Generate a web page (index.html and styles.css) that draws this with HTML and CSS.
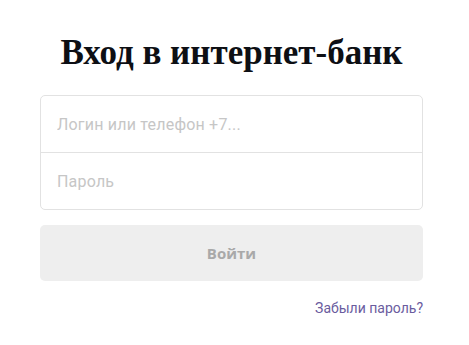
FILE: index.html
```html
<!DOCTYPE html>
<html>

<head>
    <title> Вход в интернет-банк </title>
    <link rel="stylesheet" href="styles.css">
</head>

<body>
    <div class="login">
        <h1 class="login-title">Вход в интернет-банк</h1>

        <form class="login-form">
            <div class="fields">
                <input class="field" type="text" placeholder="Логин или телефон +7...">
                <input class="field" type="password" placeholder="Пароль">
            </div>

            <button class="submit" type="button" disabled>Войти</button>

            <div class="forgot">
                <a href="#" class="forgot-link">Забыли пароль?</a>
            </div>
        </form>
    </div>
</body>

</html>
```

FILE: styles.css
```css
body {
    background-color: white;
    margin: 0;
    padding: 0;
    font-family: Roboto, "Liberation Sans", sans-serif;
}

.login {
    width: 383px;
    margin-left: 40px;
    padding-top: 33px;
}

.login-title {
    font-family: "Liberation Serif", serif;
    font-weight: bold;
    font-size: 35px;
    color: #0d0f14;
    text-align: center;
    margin: 0 0 22px 0;
    line-height: 40px;
}

.fields {
    border: 1px solid #e2e2e2;
    border-radius: 5px;
    display: flex;
    flex-direction: column;
}

.field {
    height: 56px;
    border: none;
    padding: 0 16px;
    font-family: Roboto, "Liberation Sans", sans-serif;
    font-size: 16px;
    letter-spacing: 0.2px;
    color: #333;
    background: transparent;
    outline: none;
}

.field + .field {
    border-top: 1px solid #e2e2e2;
}

.field::placeholder {
    color: #c6c6c6;
}

.submit {
    display: block;
    width: 100%;
    height: 56px;
    margin-top: 15px;
    border: none;
    border-radius: 5px;
    background-color: #eeeeee;
    color: #a9a9a9;
    font-family: "Open Sans", sans-serif;
    font-weight: bold;
    font-size: 15px;
}

.forgot {
    text-align: right;
    margin-top: 17px;
}

.forgot-link {
    color: #6a5c9e;
    font-size: 14px;
    text-decoration: none;
}
```
